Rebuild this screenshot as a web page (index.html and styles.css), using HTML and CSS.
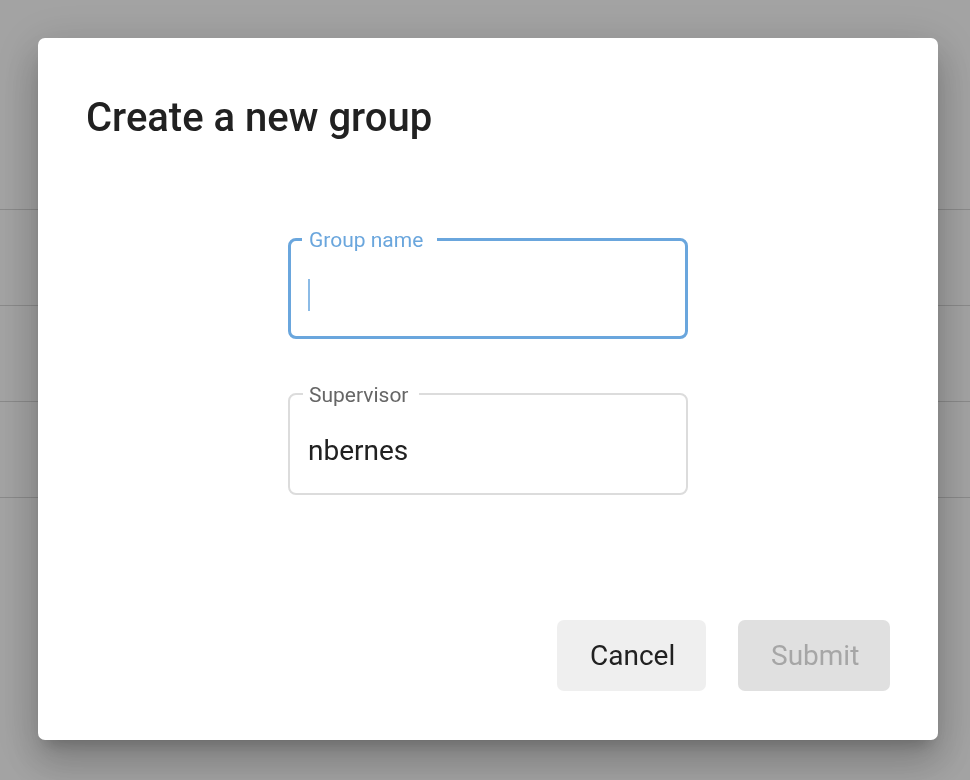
FILE: index.html
```html
<!DOCTYPE html>
<html lang="en">
<head>
<meta charset="utf-8">
<title>Create a new group</title>
<link rel="stylesheet" href="styles.css">
</head>
<body>
<div class="page">
  <div class="page-header"></div>
  <div class="table">
    <div class="row row-head"></div>
    <div class="row"></div>
    <div class="row"></div>
    <div class="row"></div>
    <div class="row row-last"></div>
  </div>
</div>

<div class="backdrop">
  <div class="dialog" role="dialog" aria-labelledby="dlg-title">
    <h2 class="dialog-title" id="dlg-title">Create a new group</h2>
    <form class="dialog-form">
      <fieldset class="field field-focused">
        <legend class="field-label">Group name</legend>
        <div class="field-input"><span class="caret"></span></div>
      </fieldset>
      <fieldset class="field">
        <legend class="field-label">Supervisor</legend>
        <div class="field-input">nbernes</div>
      </fieldset>
    </form>
    <div class="dialog-actions">
      <button type="button" class="btn btn-cancel">Cancel</button>
      <button type="button" class="btn btn-submit" disabled>Submit</button>
    </div>
  </div>
</div>
</body>
</html>
```

FILE: styles.css
```css
html, body {
  margin: 0;
  padding: 0;
}

body {
  width: 970px;
  height: 780px;
  overflow: hidden;
  background: #ffffff;
  font-family: Roboto, "Liberation Sans", sans-serif;
  color: #212121;
}

/* Page underneath the modal */
.page {
  display: flex;
  flex-direction: column;
}

.page-header {
  height: 64px;
  background: #ffffff;
}

.table {
  display: flex;
  flex-direction: column;
  background: #ffffff;
}

.row {
  height: 96px;
  border-bottom: 1px solid #d8d8d8;
  box-sizing: border-box;
}

.row-head {
  height: 146px;
}

.row-last {
  height: 112px;
  border-bottom: none;
}

/* Modal overlay */
.backdrop {
  position: fixed;
  inset: 0;
  background: rgba(0, 0, 0, 0.36);
  padding: 38px 32px 40px 38px;
  display: flex;
}

.dialog {
  flex: 1;
  background: #ffffff;
  border-radius: 7px;
  box-shadow:
    0 11px 15px -7px rgba(0, 0, 0, 0.2),
    0 24px 38px 3px rgba(0, 0, 0, 0.14),
    0 9px 46px 8px rgba(0, 0, 0, 0.12);
  display: flex;
  flex-direction: column;
  padding: 56px 48px 49px 48px;
  box-sizing: border-box;
}

.dialog-title {
  margin: 0;
  font-size: 40px;
  line-height: 47px;
  font-weight: 500;
  color: #212121;
  letter-spacing: 0;
}

.dialog-form {
  margin: 84px 0 0 0;
  display: flex;
  flex-direction: column;
  align-items: center;
  gap: 41px;
}

.field {
  width: 400px;
  box-sizing: border-box;
  margin: 0;
  padding: 0;
  border: 2px solid #dcdcdc;
  border-radius: 8px;
  min-inline-size: 0;
}

.field-label {
  margin-left: 13px;
  padding: 3px 11px 0 6px;
  font-size: 21px;
  line-height: 25px;
  color: #666666;
}

.field-input {
  padding: 26px 18px 26px 18px;
  font-size: 28px;
  line-height: 33px;
  height: 33px;
  color: #212121;
}

.field-focused {
  border: 3px solid #6aa6dd;
}

.field-focused .field-label {
  margin-left: 11px;
  padding: 3px 14px 0 7px;
  color: #6aa6dd;
}

.field-focused .field-input {
  padding: 25px 17px 25px 17px;
}

.caret {
  display: inline-block;
  vertical-align: top;
  width: 2px;
  height: 32px;
  margin-top: 1px;
  background: #8cbbe6;
}

.dialog-actions {
  margin-top: auto;
  display: flex;
  justify-content: flex-end;
  gap: 32px;
}

.btn {
  font-family: Roboto, "Liberation Sans", sans-serif;
  font-size: 28px;
  line-height: 33px;
  height: 71px;
  padding: 0 33px;
  border: none;
  border-radius: 7px;
  cursor: pointer;
}

.btn-cancel {
  background: #efefef;
  color: #212121;
  width: 149px;
}

.btn-submit {
  background: #e0e0e0;
  color: #a6a6a6;
  width: 152px;
  cursor: default;
}
```
